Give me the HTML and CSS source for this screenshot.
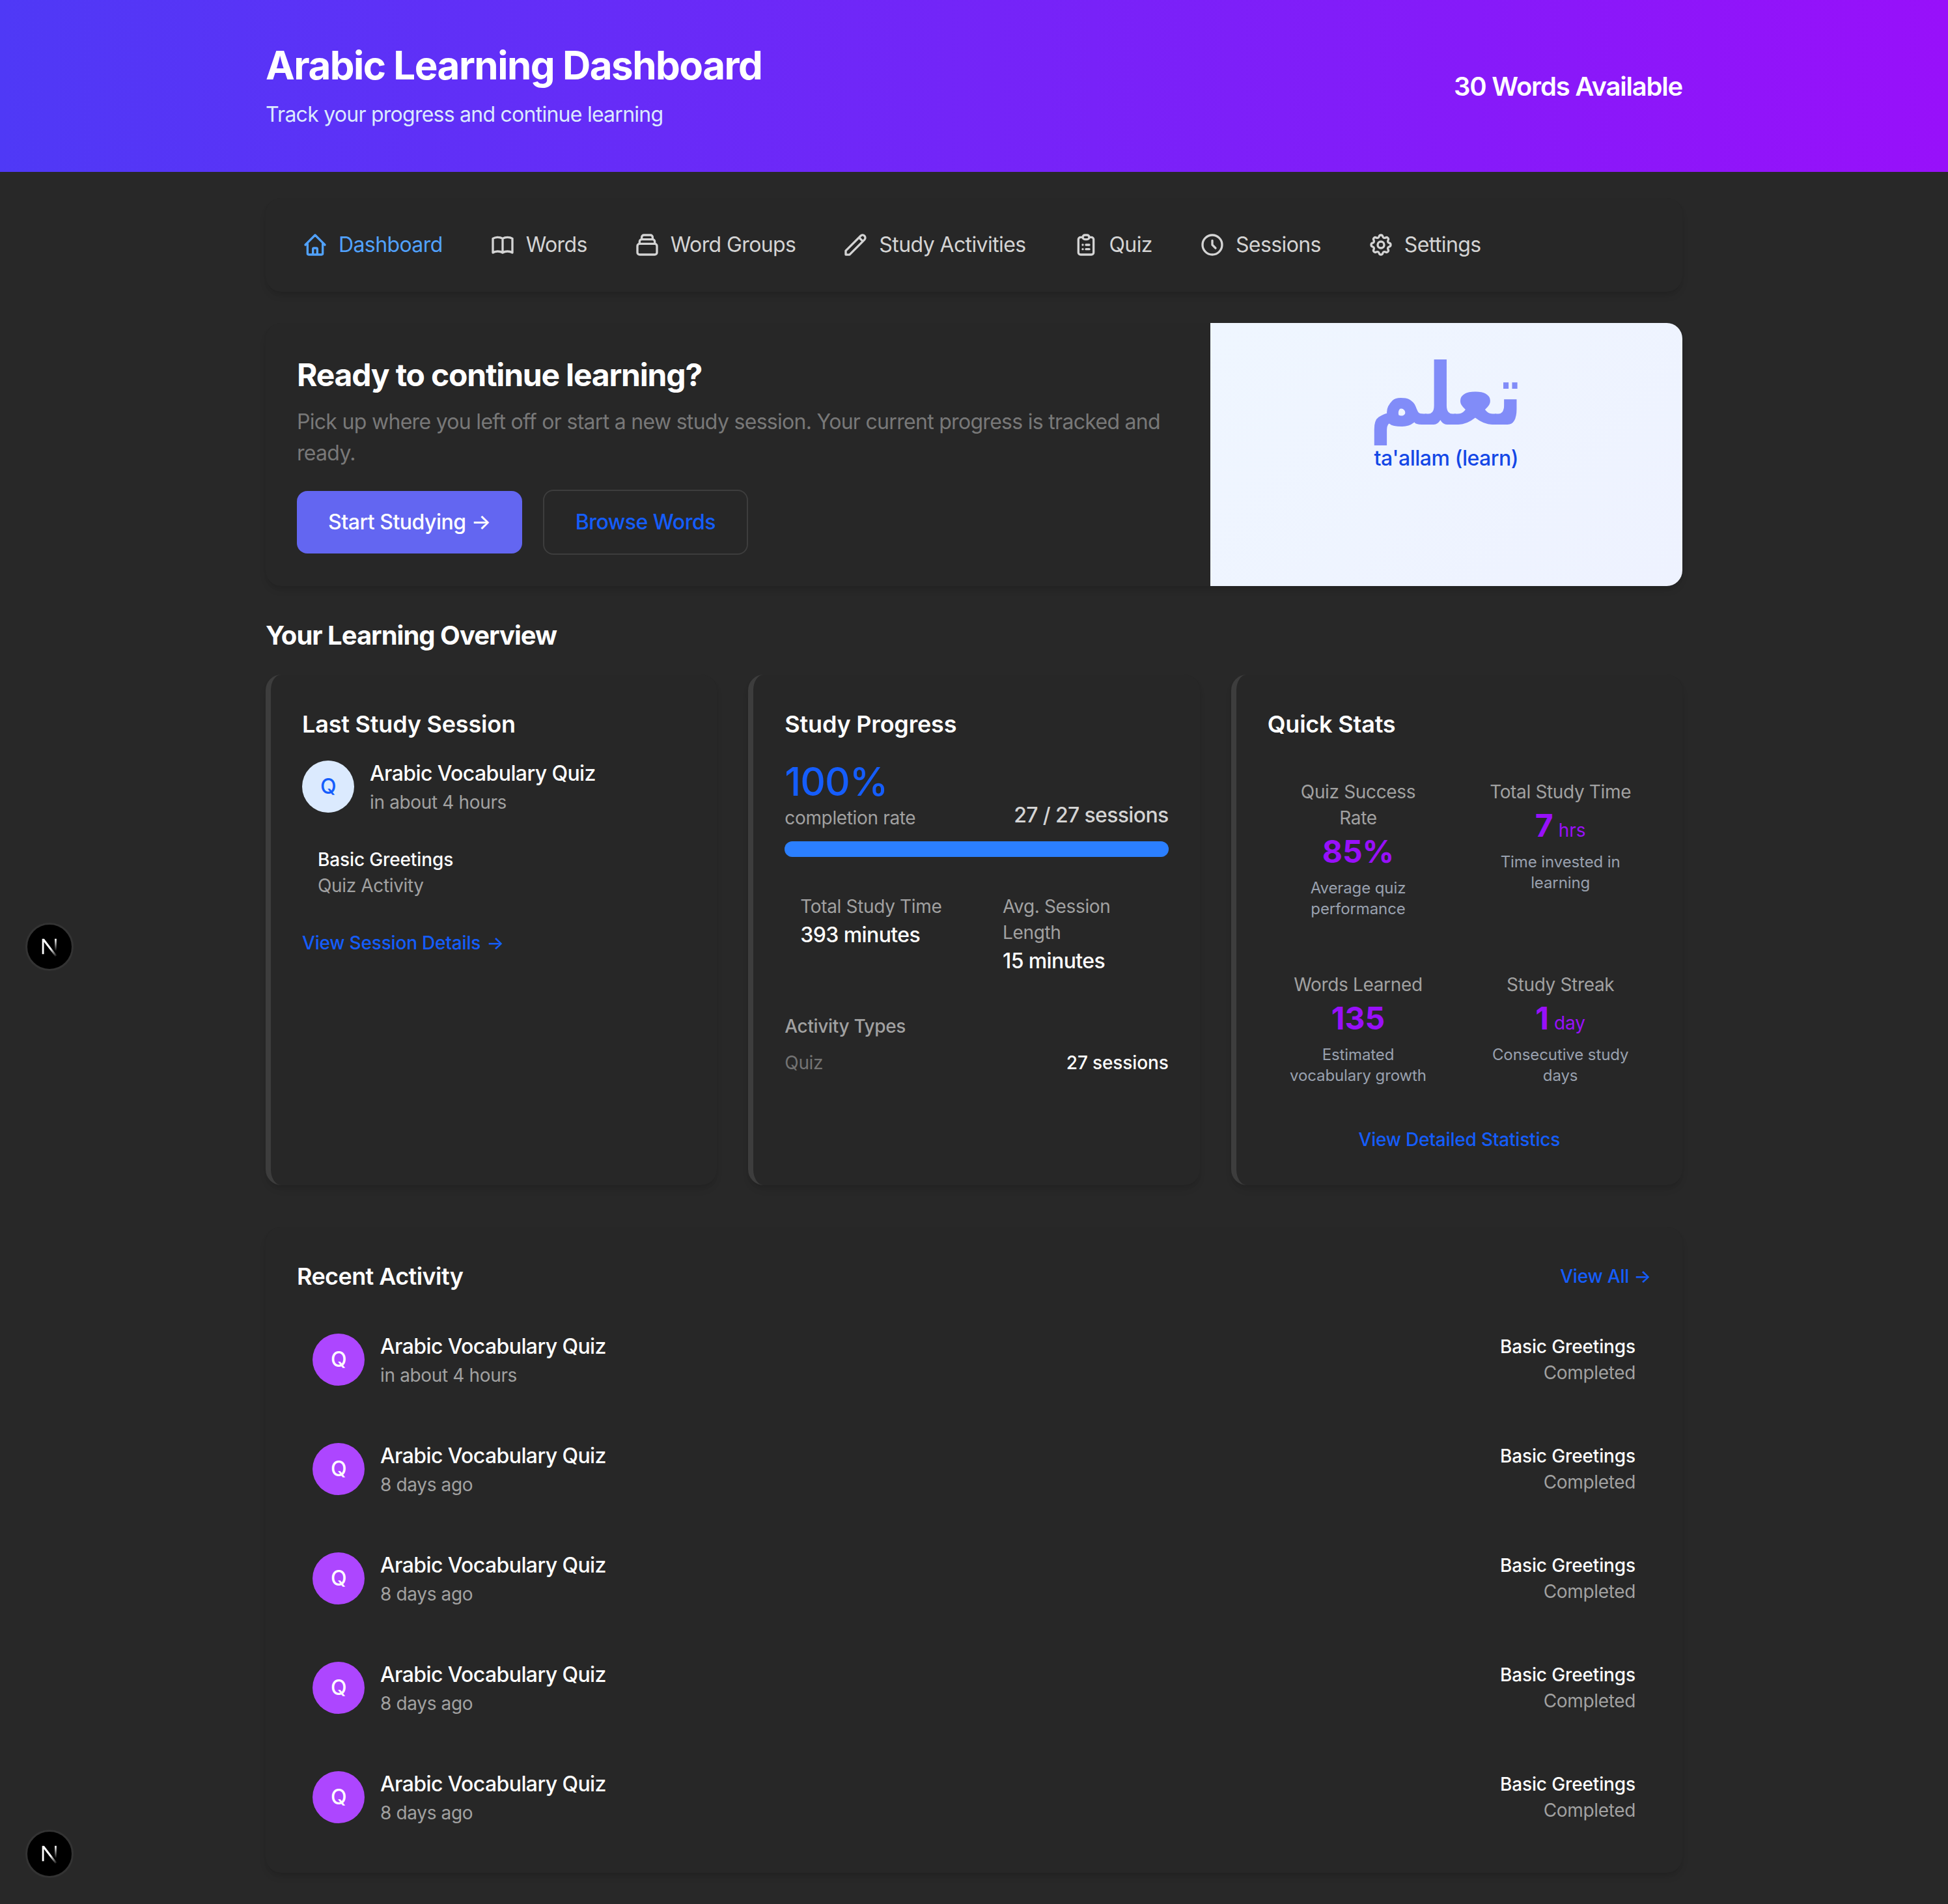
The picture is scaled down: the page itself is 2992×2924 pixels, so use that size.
FILE: index.html
```html
<!DOCTYPE html>
<html lang="en">
<head>
  <meta charset="UTF-8" />
  <title>Arabic Learning Dashboard</title>
  <link rel="stylesheet" href="styles.css">
</head>
<body>
  <header class="top">
    <div class="wrap top-row">
      <div>
        <h1>Arabic Learning Dashboard</h1>
        <p class="top-sub">Track your progress and continue learning</p>
      </div>
      <div class="top-count">30 Words Available</div>
    </div>
  </header>

  <main class="wrap main">
    <nav class="nav card">
      <a class="nav-link active"><svg viewBox="0 0 24 24"><path d="M3 12l2-2m0 0l7-7 7 7M5 10v10a1 1 0 001 1h3m10-11l2 2m-2-2v10a1 1 0 01-1 1h-3m-6 0a1 1 0 001-1v-4a1 1 0 011-1h2a1 1 0 011 1v4a1 1 0 001 1m-6 0h6"/></svg>Dashboard</a>
      <a class="nav-link"><svg viewBox="0 0 24 24"><path d="M12 6.253v13m0-13C10.832 5.477 9.246 5 7.5 5S4.168 5.477 3 6.253v13C4.168 18.477 5.754 18 7.5 18s3.332.477 4.5 1.253m0-13C13.168 5.477 14.754 5 16.5 5c1.747 0 3.332.477 4.5 1.253v13C19.832 18.477 18.247 18 16.5 18c-1.746 0-3.332.477-4.5 1.253"/></svg>Words</a>
      <a class="nav-link"><svg viewBox="0 0 24 24"><path d="M19 11H5m14 0a2 2 0 012 2v6a2 2 0 01-2 2H5a2 2 0 01-2-2v-6a2 2 0 012-2m14 0V9a2 2 0 00-2-2M5 11V9a2 2 0 012-2m0 0V5a2 2 0 012-2h6a2 2 0 012 2v2M7 7h10"/></svg>Word Groups</a>
      <a class="nav-link"><svg viewBox="0 0 24 24"><path d="M15.232 5.232l3.536 3.536m-2.036-5.036a2.5 2.5 0 113.536 3.536L6.5 21.036H3v-3.572L16.732 3.732z"/></svg>Study Activities</a>
      <a class="nav-link"><svg viewBox="0 0 24 24"><path d="M9 5H7a2 2 0 00-2 2v12a2 2 0 002 2h10a2 2 0 002-2V7a2 2 0 00-2-2h-2M9 5a2 2 0 002 2h2a2 2 0 002-2M9 5a2 2 0 012-2h2a2 2 0 012 2m-3 7h3m-3 4h3m-6-4h.01M9 16h.01"/></svg>Quiz</a>
      <a class="nav-link"><svg viewBox="0 0 24 24"><path d="M12 8v4l3 3m6-3a9 9 0 11-18 0 9 9 0 0118 0z"/></svg>Sessions</a>
      <a class="nav-link"><svg viewBox="0 0 24 24"><path d="M10.325 4.317c.426-1.756 2.924-1.756 3.35 0a1.724 1.724 0 002.573 1.066c1.543-.94 3.31.826 2.37 2.37a1.724 1.724 0 001.065 2.572c1.756.426 1.756 2.924 0 3.35a1.724 1.724 0 00-1.066 2.573c.94 1.543-.826 3.31-2.37 2.37a1.724 1.724 0 00-2.572 1.065c-.426 1.756-2.924 1.756-3.35 0a1.724 1.724 0 00-2.573-1.066c-1.543.94-3.31-.826-2.37-2.37a1.724 1.724 0 00-1.065-2.572c-1.756-.426-1.756-2.924 0-3.35a1.724 1.724 0 001.066-2.573c-.94-1.543.826-3.31 2.37-2.37.996.608 2.296.07 2.572-1.065z"/><path d="M15 12a3 3 0 11-6 0 3 3 0 016 0z"/></svg>Settings</a>
    </nav>

    <section class="hero card">
      <div class="hero-text">
        <h2 class="hero-title">Ready to continue learning?</h2>
        <p class="hero-desc">Pick up where you left off or start a new study session. Your current progress is tracked and ready.</p>
        <div class="hero-btns">
          <a class="btn btn-main">Start Studying →</a>
          <a class="btn btn-line">Browse Words</a>
        </div>
      </div>
      <div class="hero-pic">
        <div class="hero-ar" lang="ar" dir="rtl">تعلم</div>
        <div class="hero-tr">ta'allam (learn)</div>
      </div>
    </section>

    <h2 class="overview">Your Learning Overview</h2>
    <div class="cols">
      <section class="card panel">
        <h3 class="panel-title">Last Study Session</h3>
        <div class="row">
          <div class="avatar avatar-light">Q</div>
          <div>
            <div class="name">Arabic Vocabulary Quiz</div>
            <div class="small muted">in about 4 hours</div>
          </div>
        </div>
        <div class="group">
          <div class="small strong">Basic Greetings</div>
          <div class="small muted">Quiz Activity</div>
        </div>
        <a class="link link-session">View Session Details <span class="arrow">→</span></a>
      </section>

      <section class="card panel">
        <h3 class="panel-title">Study Progress</h3>
        <div class="progress-head">
          <div>
            <div class="percent">100%</div>
            <div class="small muted">completion rate</div>
          </div>
          <div class="progress-count">27 / 27 sessions</div>
        </div>
        <div class="bar"><div class="bar-fill" style="width: 100%"></div></div>
        <div class="two">
          <div class="two-cell">
            <div class="small muted">Total Study Time</div>
            <div class="name">393 minutes</div>
          </div>
          <div class="two-cell">
            <div class="small muted">Avg. Session Length</div>
            <div class="name">15 minutes</div>
          </div>
        </div>
        <div class="small muted types-title">Activity Types</div>
        <div class="types-row">
          <span class="small dim">Quiz</span>
          <span class="small strong">27 sessions</span>
        </div>
      </section>

      <section class="card panel">
        <h3 class="panel-title">Quick Stats</h3>
        <div class="two stats">
          <div class="stat">
            <div class="small muted">Quiz Success Rate</div>
            <div class="stat-val">85%</div>
            <div class="stat-note">Average quiz performance</div>
          </div>
          <div class="stat">
            <div class="small muted">Total Study Time</div>
            <div class="stat-val">7<span class="stat-unit">hrs</span></div>
            <div class="stat-note">Time invested in learning</div>
          </div>
          <div class="stat">
            <div class="small muted">Words Learned</div>
            <div class="stat-val">135</div>
            <div class="stat-note">Estimated vocabulary growth</div>
          </div>
          <div class="stat">
            <div class="small muted">Study Streak</div>
            <div class="stat-val">1<span class="stat-unit">day</span></div>
            <div class="stat-note">Consecutive study days</div>
          </div>
        </div>
        <a class="link link-stats">View Detailed Statistics</a>
      </section>
    </div>

    <section class="card recent">
      <div class="recent-head">
        <h3 class="panel-title">Recent Activity</h3>
        <a class="link">View All →</a>
      </div>
      <div class="recent-list">
        <div class="item">
          <div class="row">
            <div class="avatar avatar-purple">Q</div>
            <div>
              <div class="name">Arabic Vocabulary Quiz</div>
              <div class="small muted">in about 4 hours</div>
            </div>
          </div>
          <div class="item-right">
            <div class="small strong">Basic Greetings</div>
            <div class="small muted">Completed</div>
          </div>
        </div>
        <div class="item">
          <div class="row">
            <div class="avatar avatar-purple">Q</div>
            <div>
              <div class="name">Arabic Vocabulary Quiz</div>
              <div class="small muted">8 days ago</div>
            </div>
          </div>
          <div class="item-right">
            <div class="small strong">Basic Greetings</div>
            <div class="small muted">Completed</div>
          </div>
        </div>
        <div class="item">
          <div class="row">
            <div class="avatar avatar-purple">Q</div>
            <div>
              <div class="name">Arabic Vocabulary Quiz</div>
              <div class="small muted">8 days ago</div>
            </div>
          </div>
          <div class="item-right">
            <div class="small strong">Basic Greetings</div>
            <div class="small muted">Completed</div>
          </div>
        </div>
        <div class="item">
          <div class="row">
            <div class="avatar avatar-purple">Q</div>
            <div>
              <div class="name">Arabic Vocabulary Quiz</div>
              <div class="small muted">8 days ago</div>
            </div>
          </div>
          <div class="item-right">
            <div class="small strong">Basic Greetings</div>
            <div class="small muted">Completed</div>
          </div>
        </div>
        <div class="item">
          <div class="row">
            <div class="avatar avatar-purple">Q</div>
            <div>
              <div class="name">Arabic Vocabulary Quiz</div>
              <div class="small muted">8 days ago</div>
            </div>
          </div>
          <div class="item-right">
            <div class="small strong">Basic Greetings</div>
            <div class="small muted">Completed</div>
          </div>
        </div>
      </div>
    </section>
  </main>

  <div class="next-badge next-one">
    <svg viewBox="0 0 72 72"><defs><linearGradient id="nx1" x1="0" y1="0" x2="1" y2="1"><stop offset="0.55" stop-color="#fff"/><stop offset="1" stop-color="#fff" stop-opacity="0"/></linearGradient><linearGradient id="nx2" x1="0" y1="0" x2="0" y2="1"><stop offset="0" stop-color="#fff"/><stop offset="1" stop-color="#fff" stop-opacity="0"/></linearGradient></defs><path d="M24 23h3.4L48 50l-2.6 2L27 28v20h-3z" fill="url(#nx1)"/><rect x="44.5" y="23" width="3" height="20" fill="url(#nx2)"/></svg>
  </div>
  <div class="next-badge next-two">
    <svg viewBox="0 0 72 72"><path d="M24 23h3.4L48 50l-2.6 2L27 28v20h-3z" fill="url(#nx1)"/><rect x="44.5" y="23" width="3" height="20" fill="url(#nx2)"/></svg>
  </div>
</body>
</html>
```

FILE: styles.css
```css
* {
  box-sizing: border-box;
}
body {
  margin: 0;
  background: #282828;
  color: #fff;
  font-family: Inter, "Liberation Sans", sans-serif;
  font-size: 32px;
  line-height: 48px;
  letter-spacing: -0.5px;
}
h1, h2, h3, p {
  margin: 0;
}
.wrap {
  width: 2176px;
  margin: 0 auto;
}

/* top banner */
.top {
  background: linear-gradient(to right, #4f39f6, #9810fa);
  padding: 64px 0;
}
.top-row {
  display: flex;
  justify-content: space-between;
  align-items: center;
}
.top h1 {
  font-size: 60px;
  line-height: 72px;
  font-weight: 700;
  letter-spacing: -1.5px;
}
.top-sub {
  margin-top: 16px;
  line-height: 48px;
  letter-spacing: -0.75px;
  color: #dbeafe;
}
.top-count {
  padding-top: 2px;
  font-size: 40px;
  line-height: 56px;
  font-weight: 600;
  letter-spacing: -1.2px;
}

.main {
  padding: 40px 0 48px;
}
.card {
  background: #272727;
  border-radius: 24px;
  box-shadow: 0 8px 12px -2px rgba(0, 0, 0, 0.1), 0 4px 8px -4px rgba(0, 0, 0, 0.1);
}

/* nav */
.nav {
  display: flex;
  gap: 24px;
  padding: 32px;
}
.nav-link {
  display: flex;
  align-items: center;
  gap: 16px;
  padding: 16px 24px;
  letter-spacing: -0.6px;
  color: #d4d4d4;
}
.nav-link svg {
  width: 40px;
  height: 40px;
  fill: none;
  stroke: currentColor;
  stroke-width: 2;
  stroke-linecap: round;
  stroke-linejoin: round;
}
.nav-link.active {
  color: #51a2ff;
}

/* hero */
.hero {
  display: grid;
  grid-template-columns: 2fr 1fr;
  margin-top: 48px;
  overflow: hidden;
}
.hero-text {
  padding: 48px;
}
.hero-title {
  font-size: 48px;
  line-height: 64px;
  font-weight: 700;
  letter-spacing: -1.2px;
}
.hero-desc {
  margin-top: 16px;
  letter-spacing: -0.7px;
  color: #787878;
}
.hero-btns {
  display: flex;
  align-items: center;
  gap: 32px;
  margin-top: 32px;
}
.btn {
  padding: 24px 48px;
  border-radius: 16px;
  font-weight: 500;
}
.btn-main {
  background: #6366f1;
}
.btn-line {
  border: 2px solid #3d3d3d;
  color: #155dfc;
}
.hero-pic {
  display: flex;
  flex-direction: column;
  align-items: center;
  padding-top: 36px;
  background: linear-gradient(135deg, #eff6ff, #eef2ff);
}
.hero-ar {
  font-family: "DejaVu Sans", sans-serif;
  font-size: 120px;
  line-height: 150px;
  font-weight: 700;
  color: #818cf8;
  transform: scale(0.92, 1.1);
}
.hero-tr {
  margin-top: -2px;
  color: #1447e6;
  font-weight: 500;
}

.overview {
  margin: 48px 0 32px;
  font-size: 40px;
  line-height: 56px;
  font-weight: 700;
  letter-spacing: -1px;
}

/* three panels */
.cols {
  display: grid;
  grid-template-columns: repeat(3, 1fr);
  gap: 48px;
}
.panel {
  height: 784px;
  padding: 48px;
  border-left: 8px solid #3d3d3d;
}
.panel-title {
  font-size: 36px;
  line-height: 56px;
  font-weight: 600;
  letter-spacing: -0.2px;
}
.panel .panel-title {
  margin-bottom: 24px;
}
.row {
  display: flex;
  align-items: center;
  gap: 24px;
}
.avatar {
  display: flex;
  align-items: center;
  justify-content: center;
  flex-shrink: 0;
  width: 80px;
  height: 80px;
  border-radius: 50%;
  font-weight: 500;
}
.avatar-light {
  background: #dbeafe;
  color: #155dfc;
}
.avatar-purple {
  background: #ad46ff;
}
.name {
  font-weight: 500;
  letter-spacing: -0.6px;
}
.small {
  font-size: 28px;
  line-height: 40px;
  letter-spacing: -0.35px;
}
.muted {
  color: #a1a1a1;
}
.dim {
  color: #737373;
}
.strong {
  font-weight: 500;
  letter-spacing: -0.13px;
}
.group {
  margin-top: 24px;
  padding: 24px;
}
.link {
  color: #155dfc;
  font-size: 28px;
  line-height: 40px;
  font-weight: 500;
  letter-spacing: -0.19px;
}
.link-session {
  display: block;
  margin-top: 24px;
}
.arrow {
  margin-left: 2px;
}
.link-stats {
  display: block;
  margin-top: 38px;
  text-align: center;
}

.progress-head {
  display: flex;
  justify-content: space-between;
  align-items: flex-end;
}
.percent {
  font-size: 60px;
  line-height: 72px;
  font-weight: 500;
  letter-spacing: -1px;
  color: #155dfc;
}
.progress-count {
  font-weight: 500;
  letter-spacing: -0.65px;
  color: #d4d4d4;
}
.bar {
  height: 24px;
  margin-top: 16px;
  border-radius: 12px;
  background: #404040;
}
.bar-fill {
  height: 100%;
  border-radius: 12px;
  background: #2b7fff;
}
.two {
  display: grid;
  grid-template-columns: 1fr 1fr;
  gap: 32px;
  margin-top: 32px;
}
.two-cell {
  padding: 24px;
}
.types-title {
  margin-top: 32px;
  font-weight: 500;
}
.types-row {
  display: flex;
  justify-content: space-between;
  margin-top: 16px;
}

.stat {
  padding: 24px;
  text-align: center;
}
.stat-val {
  font-size: 48px;
  line-height: 64px;
  font-weight: 700;
  letter-spacing: 0;
  color: #9810fa;
}
.stat-unit {
  margin-left: 8px;
  font-size: 28px;
  line-height: 1;
  font-weight: 400;
}
.stat-note {
  margin-top: 8px;
  font-size: 24px;
  line-height: 32px;
  letter-spacing: -0.1px;
  color: #99a1af;
}

/* recent */
.recent {
  margin-top: 64px;
  padding: 48px;
}
.recent-head {
  display: flex;
  justify-content: space-between;
  align-items: center;
  margin-bottom: 32px;
}
.recent .panel-title {
  letter-spacing: -0.6px;
}
.recent-list {
  display: flex;
  flex-direction: column;
  gap: 32px;
}
.item {
  display: flex;
  justify-content: space-between;
  align-items: center;
  padding: 24px;
}
.item-right {
  text-align: right;
}

/* dev badge in the corner */
.next-badge {
  position: absolute;
  left: 39px;
  width: 74px;
  height: 74px;
  border: 3px solid #333;
  border-radius: 50%;
  background: #000;
}
.next-badge svg {
  display: block;
  width: 100%;
  height: 100%;
}
.next-one {
  top: 1417px;
}
.next-two {
  top: 2810px;
}
```
